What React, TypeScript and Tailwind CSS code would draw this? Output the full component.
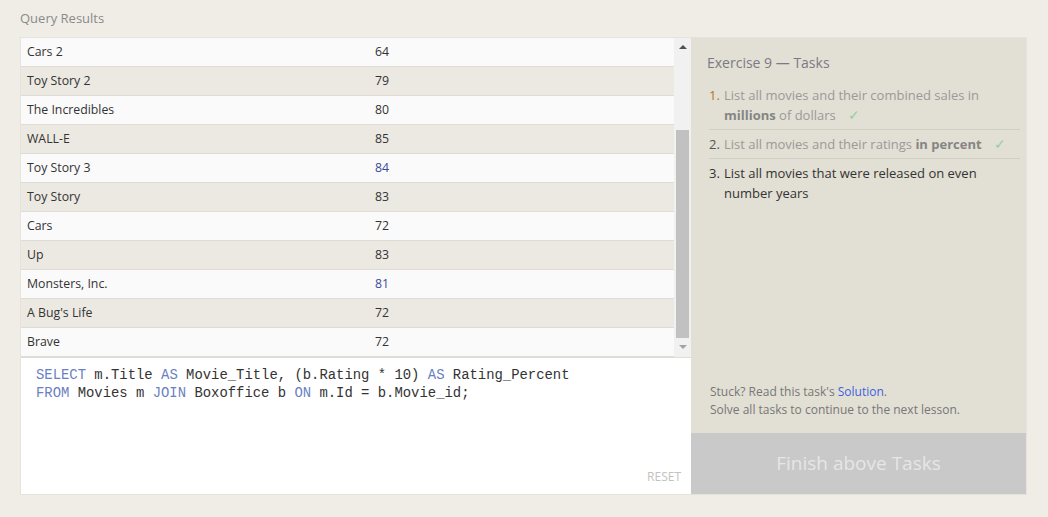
import React from "react";

const rows: [string, string, boolean?][] = [
  ["Cars 2", "64", true],
  ["Toy Story 2", "79"],
  ["The Incredibles", "80"],
  ["WALL-E", "85"],
  ["Toy Story 3", "84", true],
  ["Toy Story", "83"],
  ["Cars", "72"],
  ["Up", "83"],
  ["Monsters, Inc.", "81", true],
  ["A Bug's Life", "72"],
  ["Brave", "72"],
];

function Kw({ children }: { children: React.ReactNode }) {
  return <span className="text-[#6b7fc4]">{children}</span>;
}

function Check() {
  return <span className="ml-3 text-[14px] text-[#8fd19e]">✓</span>;
}

export default function App() {
  return (
    <div className="min-h-[517px] w-[1048px] bg-[#f0ede6] px-5 pt-[9px] font-['Open_Sans',sans-serif]">
      <div className="text-[13px] leading-[18px] text-[#8a8a8a]">Query Results</div>

      <div className="mt-[10px] flex w-[1007px] border border-[#e6e3dc]">
        {/* left: results + editor */}
        <div className="flex w-[670px] flex-col">
          <div className="flex h-[320px] border-b border-[#e0ddd5]">
            <div className="flex-1">
              {rows.map(([title, rating], i) => (
                <div
                  key={title}
                  className={`flex h-[29px] items-center border-b border-[#dedcd5] text-[12.3px] text-[#333] ${
                    i % 2 === 0 ? "bg-[#fafafa]" : "bg-[#ebe9e2]"
                  }`}
                >
                  <div className="w-[354px] pl-[6px]">{title}</div>
                  <div className={rows[i][2] && i > 0 ? "text-[#3a4a9a]" : ""}>{rating}</div>
                </div>
              ))}
            </div>
            {/* scrollbar */}
            <div className="flex w-[17px] flex-col items-center bg-[#f1f1f1]">
              <div className="flex h-[17px] items-center justify-center">
                <svg width="8" height="4" viewBox="0 0 8 4">
                  <path d="M0 4 L4 0 L8 4 Z" fill="#505050" />
                </svg>
              </div>
              <div className="mt-[75px] h-[208px] w-[13px] bg-[#c1c1c1]" />
              <div className="flex h-[17px] items-center justify-center">
                <svg width="8" height="4" viewBox="0 0 8 4">
                  <path d="M0 0 L4 4 L8 0 Z" fill="#a3a3a3" />
                </svg>
              </div>
            </div>
          </div>

          <div className="flex h-[136px] flex-col bg-white pl-[15px] pr-[10px] pt-[8px]">
            <pre className="font-['Liberation_Mono',monospace] text-[13.9px] leading-[18px] text-[#333]">
              <Kw>SELECT</Kw> m.Title <Kw>AS</Kw> Movie_Title, (b.Rating * 10) <Kw>AS</Kw> Rating_Percent
              {"\n"}
              <Kw>FROM</Kw> Movies m <Kw>JOIN</Kw> Boxoffice b <Kw>ON</Kw> m.Id = b.Movie_id;
            </pre>
            <div className="mt-auto mb-[8px] self-end text-[12px] text-[#c2c2c2]">RESET</div>
          </div>
        </div>

        {/* right: tasks */}
        <div className="flex flex-1 flex-col bg-[#e2dfd4]">
          <div className="flex flex-1 flex-col pl-4 pr-[6px] pt-[14px]">
            <div className="text-[14px] leading-[22px] text-[#7a7a85]">Exercise 9 — Tasks</div>
            <ol className="mt-[11px] pl-[2px] text-[13px] leading-[20px]">
              <li className="flex border-b border-[#d1cec3] pb-[4px]">
                <span className="w-[15px] shrink-0 text-[#b07a30]">1.</span>
                <span className="text-[#9a9a9a]">
                  List all movies and their combined sales in <b className="text-[#858585]">millions</b> of dollars
                  <Check />
                </span>
              </li>
              <li className="flex border-b border-[#d1cec3] py-[4px]">
                <span className="w-[15px] shrink-0 text-[#555]">2.</span>
                <span className="text-[#9a9a9a]">
                  List all movies and their ratings <b className="text-[#858585]">in percent</b>
                  <Check />
                </span>
              </li>
              <li className="flex py-[4px] pr-[30px]">
                <span className="w-[15px] shrink-0 text-[#333]">3.</span>
                <span className="text-[#333]">List all movies that were released on even number years</span>
              </li>
            </ol>
            <div className="mt-auto mb-[14px] pl-[3px] text-[12px] leading-[18px] text-[#777]">
              <div>
                Stuck? Read this task's <span className="text-[#3d5fe0]">Solution</span>.
              </div>
              <div>Solve all tasks to continue to the next lesson.</div>
            </div>
          </div>
          <div className="flex h-[61px] items-center justify-center bg-[#c9c9c9] text-[19px] text-[#e6e6e6]">
            Finish above Tasks
          </div>
        </div>
      </div>
    </div>
  );
}
